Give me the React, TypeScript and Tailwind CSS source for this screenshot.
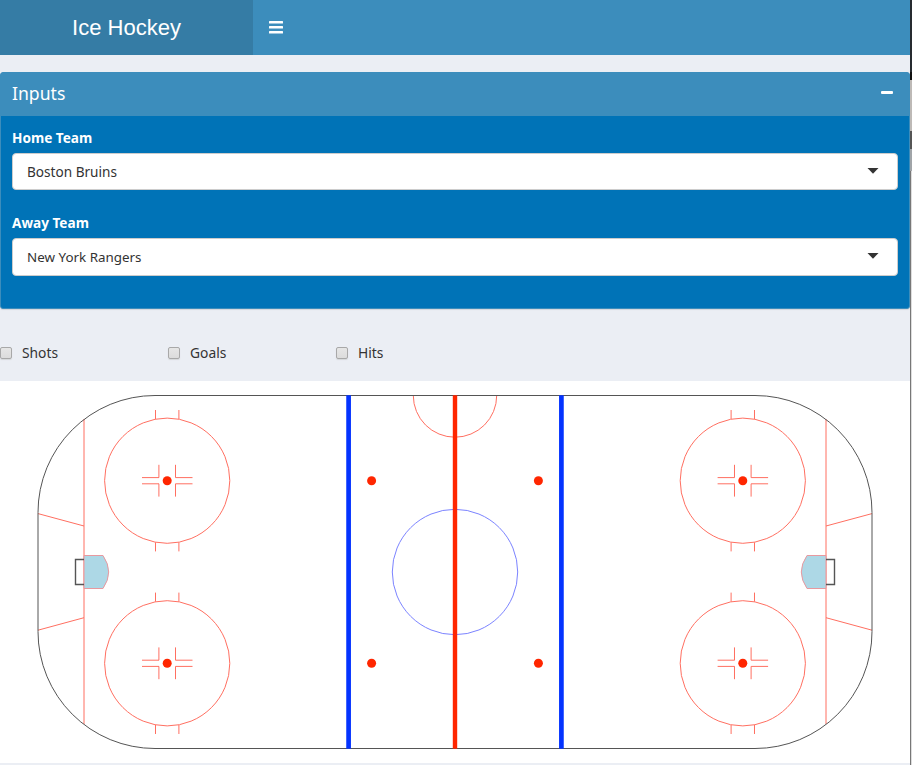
const TEAM_FONT = "font-['Noto_Sans','Open_Sans',sans-serif]";

function TeamSelect({ label, value, tall }: { label: string; value: string; tall?: boolean }) {
  return (
    <div>
      <div className="h-[26px] text-[13.6px] leading-[22px] font-bold text-white">{label}</div>
      <button
        className={`flex w-full items-center justify-between rounded-[4px] border border-[#cccccc] bg-white pr-[18px] pl-[14px] text-[#333333] ${tall ? "h-[38px] text-[13.4px]" : "h-[37px] pt-px text-[13.6px]"}`}
      >
        <span>{value}</span>
        <svg width="12" height="6" viewBox="0 0 12 6" className="mb-[3px]">
          <path d="M.5 0h11L6 5.8z" fill="#333" />
        </svg>
      </button>
    </div>
  );
}

function Check({ label }: { label: string }) {
  return (
    <label className="flex w-[168px] items-center text-[13.8px] text-[#333333]">
      <span className="mr-[10px] h-3 w-3 rounded-[2px] border border-[#a8a8a8] bg-linear-to-b from-[#e6e6e6] to-[#dcdcdc] shadow-[0_1px_1px_#d5d7da]" />
      {label}
    </label>
  );
}

function FaceoffSpot({ x, y }: { x: number; y: number }) {
  return (
    <g transform={`translate(${x} ${y})`}>
      <circle r="62.6" />
      <path d="M-11.7-70.7v9M11.7-70.7v9M-11.7 61.7v9M11.7 61.7v9" />
      <path d="M-25.2-3.1h17M8.3-3.1h17M-25.2 3.1h17M8.3 3.1h17M-8.3-15.9v12.8M8.3-15.9v12.8M-8.3 3.1v12.8M8.3 3.1v12.8" />
      <circle r="4.5" fill="#ff2600" stroke="none" />
    </g>
  );
}

function RinkEnd() {
  return (
    <>
      <path d="M84 419v305M38 513.6l46 12.4M38 630.2l46-12.5" />
      <path d="M84 555.5h19q11.4 16.5 0 33H84z" fill="#add8e6" stroke="#e8999f" />
      <path d="M84 559.5h-8.5v25H84" stroke="#555" strokeWidth="1.4" />
    </>
  );
}

function Rink() {
  return (
    <svg viewBox="0 381 910 382" width="910" height="382" fill="none" stroke="#ff6f61" strokeWidth="1" className="block">
      <circle cx="455" cy="572" r="62.7" stroke="#7b83ff" />
      <path d="M413.3 395.5a41.7 41.7 0 0 0 83.4 0" />
      <RinkEnd />
      <g transform="translate(910 0) scale(-1 1)">
        <RinkEnd />
      </g>
      {[167.2, 742.8].map((x) => [480.7, 663.3].map((y) => <FaceoffSpot key={`${x}-${y}`} x={x} y={y} />))}
      {[371.6, 538.4].map((x) =>
        [480.7, 663.3].map((y) => <circle key={`${x}-${y}`} cx={x} cy={y} r="4.5" fill="#ff2600" stroke="none" />),
      )}
      <rect x="38" y="395.5" width="834" height="353" rx="117" stroke="#555" />
      <path d="M348.6 395.3v353.4M561.4 395.3v353.4" stroke="#0433ff" strokeWidth="4.7" />
      <path d="M455 395.3v353.4" stroke="#ff2600" strokeWidth="4.4" />
    </svg>
  );
}

export default function App() {
  return (
    <div className={`flex h-[765px] w-[912px] overflow-hidden bg-[#ecf0f5] ${TEAM_FONT}`}>
      <main className="w-[910px] shrink-0 bg-[#ebeef4]">
        <header className="flex h-[55px] bg-[#3c8dbc] text-white">
          <div className="flex w-[253px] items-center justify-center bg-[#357ca5] font-['Liberation_Sans',Arial,sans-serif] text-[22px]">
            Ice Hockey
          </div>
          <button className="flex items-center pl-4">
            <svg width="14" height="13" viewBox="0 0 14 13" fill="white">
              <rect width="14" height="2.6" rx=".5" />
              <rect y="5" width="14" height="2.6" rx=".5" />
              <rect y="10" width="14" height="2.6" rx=".5" />
            </svg>
          </button>
        </header>
        <section className="mt-[17px] h-[237px] rounded-[3px] border border-[#3c8dbc] bg-[#0073b7] shadow-[0_1px_1px_rgba(0,0,0,0.1)]">
          <div className="flex h-[43px] items-center justify-between bg-[#3c8dbc] pr-4 pl-[11px] text-white">
            <h3 className="mb-[2px] text-[17.6px]">Inputs</h3>
            <span className="mb-[4px] h-[3px] w-3 rounded-[1px] bg-white" />
          </div>
          <div className="flex flex-col gap-[22px] px-[11px] pt-[11px]">
            <TeamSelect label="Home Team" value="Boston Bruins" />
            <TeamSelect label="Away Team" value="New York Rangers" tall />
          </div>
        </section>
        <div className="flex h-[72px] pt-4">
          <Check label="Shots" />
          <Check label="Goals" />
          <Check label="Hits" />
        </div>
        <div className="h-[382px] bg-white">
          <Rink />
        </div>
      </main>
      <aside className="flex w-[2px] flex-col bg-[#88898b]">
        <div className="h-[72px] bg-[#262b30]" />
        <div className="h-2 bg-[#111111]" />
        <div className="h-[51px] bg-[#bdb9b6]" />
        <div className="h-[18px] bg-[#555555]" />
        <div className="h-[22px] bg-[#a0a4a8]" />
        <div className="flex flex-1">
          <div className="w-px bg-[#777777]" />
          <div className="w-px bg-[#dddddd]" />
        </div>
      </aside>
    </div>
  );
}
